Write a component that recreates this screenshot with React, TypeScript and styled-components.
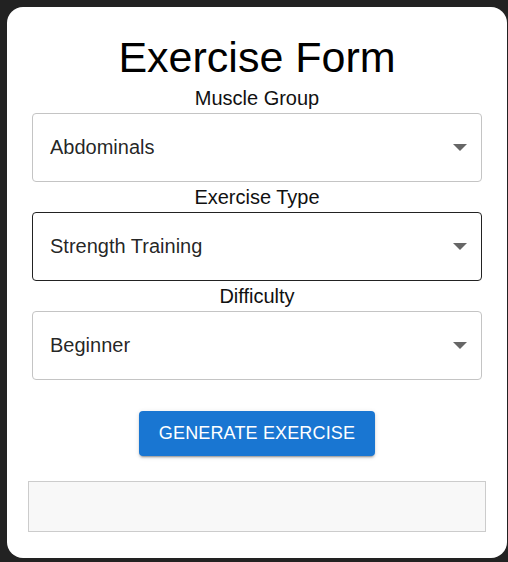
import React from "react";
import styled, { createGlobalStyle } from "styled-components";

const Global = createGlobalStyle`
  html, body {
    margin: 0;
    padding: 0;
    background: #222222;
    min-height: 100%;
  }
  body {
    padding: 7px;
    font-family: "Liberation Sans", Arial, sans-serif;
  }
`;

const Card = styled.div`
  width: 500px;
  box-sizing: border-box;
  background: #ffffff;
  border-radius: 16px;
  padding: 26px 0 26px;
  display: flex;
  flex-direction: column;
  align-items: center;
`;

const Title = styled.h1`
  margin: 0 0 4px;
  font-size: 43px;
  line-height: 1.15;
  font-weight: 400;
  color: #000;
`;

const Field = styled.div`
  display: flex;
  flex-direction: column;
  align-items: center;
  margin-bottom: 3px;
`;

const Label = styled.label`
  font-size: 20px;
  line-height: 24px;
  color: #111;
  margin-bottom: 3px;
`;

const SelectBox = styled.div<{ $active?: boolean }>`
  width: 450px;
  height: 69px;
  box-sizing: border-box;
  border: 1px solid ${(p) => (p.$active ? "#222222" : "#c4c4c4")};
  border-radius: 4px;
  display: flex;
  align-items: center;
  justify-content: space-between;
  padding: 0 14px 0 17px;
  font-size: 20px;
  color: rgba(0, 0, 0, 0.87);
`;

const Arrow = styled.svg`
  width: 14px;
  height: 7px;
  display: block;
`;

const Button = styled.button`
  margin-top: 28px;
  height: 45px;
  padding: 0 20px;
  border: none;
  border-radius: 4px;
  background: #1976d2;
  color: #ffffff;
  font-family: "Liberation Sans", Arial, sans-serif;
  font-size: 18px;
  letter-spacing: 0.15px;
  text-transform: uppercase;
  box-shadow: 0px 3px 1px -2px rgba(0, 0, 0, 0.2), 0px 2px 2px 0px rgba(0, 0, 0, 0.14),
    0px 1px 5px 0px rgba(0, 0, 0, 0.12);
  cursor: pointer;
`;

const Output = styled.div`
  margin-top: 25px;
  width: 458px;
  height: 51px;
  box-sizing: border-box;
  background: #f8f8f8;
  border: 1px solid #cccccc;
`;

const fields = [
  { label: "Muscle Group", value: "Abdominals", active: false },
  { label: "Exercise Type", value: "Strength Training", active: true },
  { label: "Difficulty", value: "Beginner", active: false },
];

export default function App() {
  return (
    <>
      <Global />
      <Card>
        <Title>Exercise Form</Title>
        {fields.map((f) => (
          <Field key={f.label}>
            <Label>{f.label}</Label>
            <SelectBox $active={f.active}>
              <span>{f.value}</span>
              <Arrow viewBox="0 0 14 7">
                <polygon points="0,0 14,0 7,7" fill="#666666" />
              </Arrow>
            </SelectBox>
          </Field>
        ))}
        <Button>Generate Exercise</Button>
        <Output />
      </Card>
    </>
  );
}
